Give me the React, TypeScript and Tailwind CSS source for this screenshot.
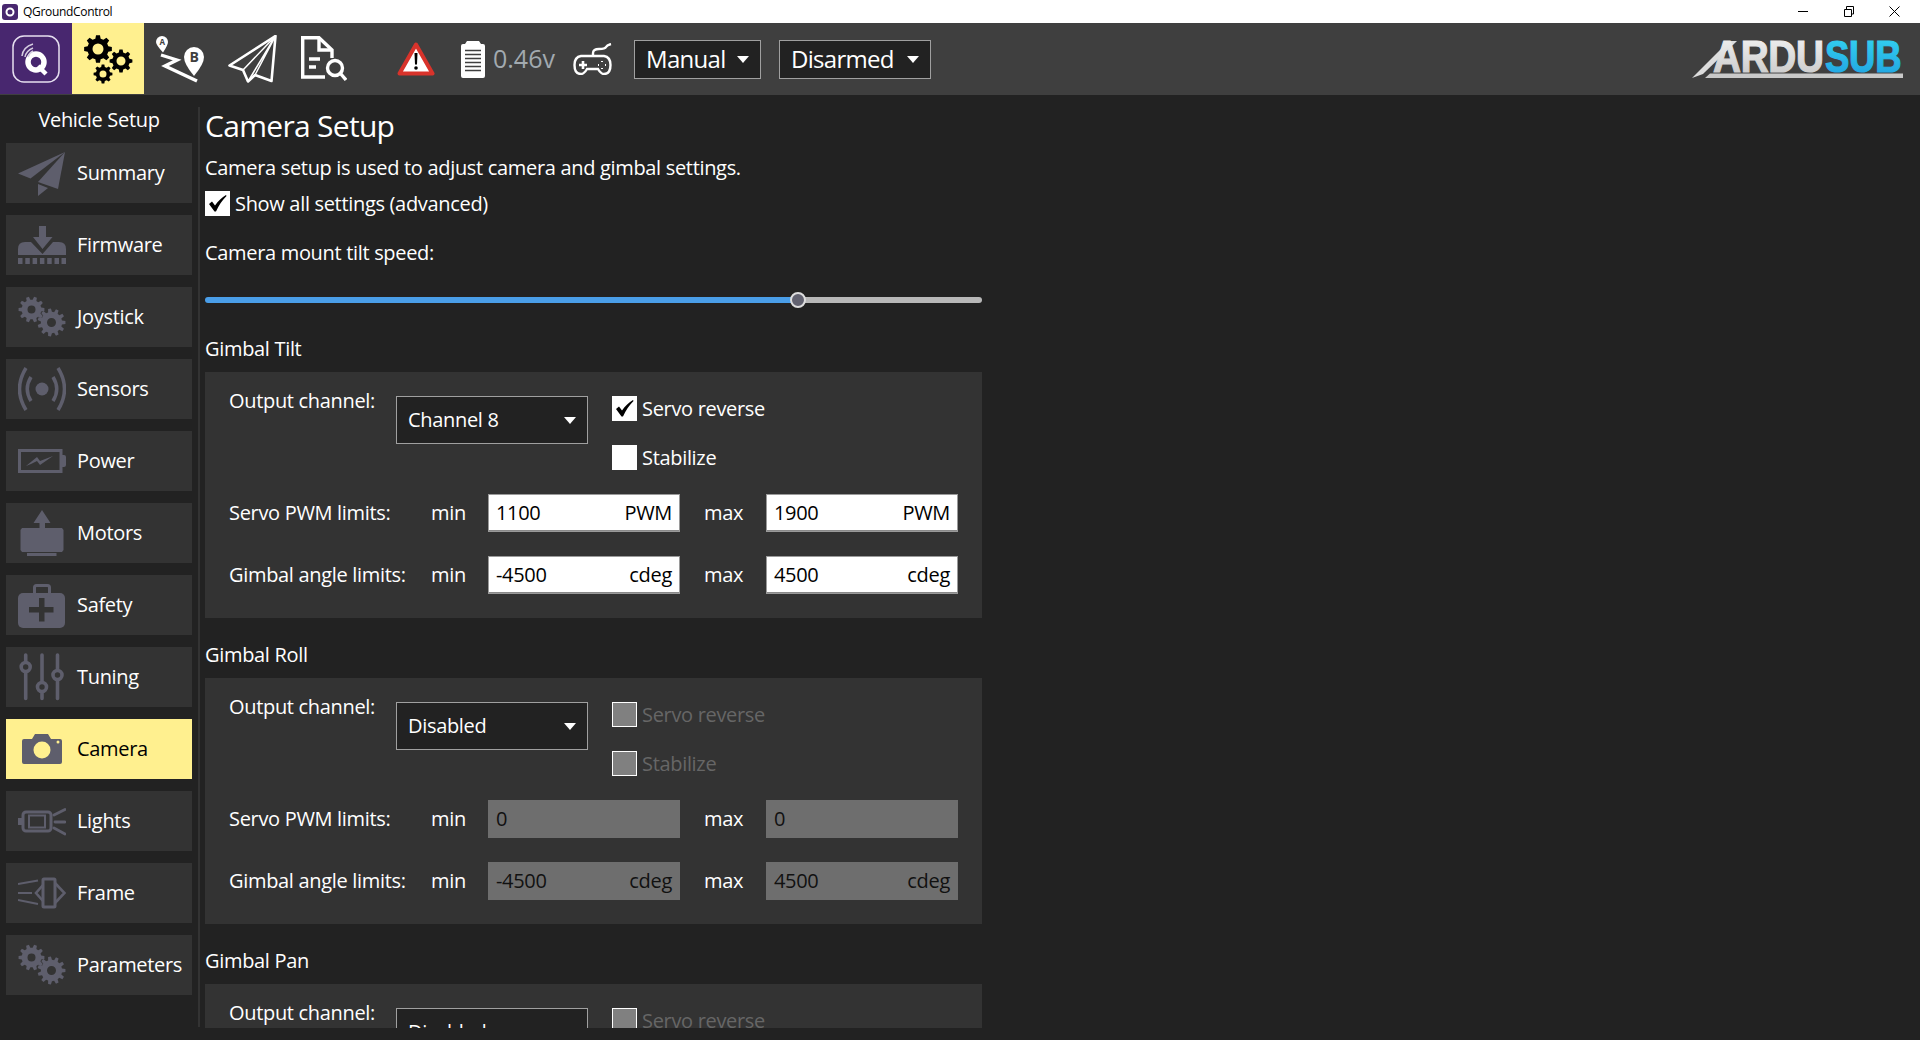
import type { ReactNode } from "react";

const ICON = "#5e5e6c";
const PANEL = "#333333";

/** Build a gear outline (with hole) as an svg path. */
function gearPath(cx: number, cy: number, r: number, teeth: number, hole: number) {
  const inner = r * 0.76;
  const step = (Math.PI * 2) / teeth;
  let d = "";
  for (let i = 0; i < teeth; i++) {
    const a = i * step;
    const pts: [number, number][] = [
      [inner, a - step * 0.32],
      [r, a - step * 0.18],
      [r, a + step * 0.18],
      [inner, a + step * 0.32],
    ];
    for (const [rad, ang] of pts) {
      d += `${d ? "L" : "M"}${(cx + rad * Math.cos(ang)).toFixed(2)} ${(cy + rad * Math.sin(ang)).toFixed(2)}`;
    }
  }
  d += `Z M${cx - hole} ${cy} a${hole} ${hole} 0 1 0 ${hole * 2} 0 a${hole} ${hole} 0 1 0 ${-hole * 2} 0 Z`;
  return d;
}

function Gears() {
  return (
    <svg width="48" height="48" viewBox="0 0 48 48">
      <path fill={ICON} fillRule="evenodd" d={gearPath(13.5, 16.5, 13, 10, 4)} />
      <path fill={ICON} fillRule="evenodd" d={gearPath(33.5, 29.5, 14, 11, 4.5)} />
    </svg>
  );
}

const sidebarIcons: Record<string, ReactNode> = {
  Summary: (
    <svg width="48" height="48" viewBox="0 0 48 48" fill={ICON}>
      <path d="M47 3 0 24.5 12.5 29.5Z" />
      <path d="M47 3 20 33 40 40Z" />
      <path d="M20 35V47L30 39Z" />
    </svg>
  ),
  Firmware: (
    <svg width="48" height="48" viewBox="0 0 48 48" fill={ICON}>
      <path d="M21 5h7v11h6.500L24.500 28 15 16h6Z" />
      <path d="M0 34v-6q0-7 7-7h6l11.500 12L35 21h6q7 0 7 7v6Z" />
      <path d="M0 37h4.500v6H0ZM7.300 37h4.500v6H7.300ZM14.600 37h4.500v6h-4.500ZM21.900 37h4.500v6h-4.500ZM29.200 37h4.500v6h-4.500ZM36.500 37h4.500v6h-4.500ZM43.500 37H48v6h-4.500Z" />
    </svg>
  ),
  Joystick: <Gears />,
  Sensors: (
    <svg width="48" height="48" viewBox="0 0 48 48" fill="none" stroke={ICON} strokeWidth="3.500">
      <circle cx="24" cy="24" r="6.500" fill={ICON} stroke="none" />
      <path d="M13 12Q5.500 24 13 36M35 12Q42.500 24 35 36" />
      <path d="M8 3Q-5 24 8 45M40 3Q53 24 40 45" />
    </svg>
  ),
  Power: (
    <svg width="48" height="48" viewBox="0 0 48 48" fill="none">
      <path stroke={ICON} strokeWidth="3" d="M1.500 13.500H43V34.500H1.500Z" />
      <path fill={ICON} d="M44 18h2q2 0 2 2v8q0 2-2 2h-2Z" />
      <path fill={ICON} d="M8 29 19 20l3 4 13-5-13 9-3-4-6 3Z" />
    </svg>
  ),
  Motors: (
    <svg width="48" height="48" viewBox="0 0 48 48" fill={ICON}>
      <path d="M24 1 32.500 14H27V19H21.500V14H15.500Z" />
      <path d="M4 19H44L45.500 21V41L44 43H4L2.500 41V21Z" />
      <path d="M9 44H38.500V47H9Z" />
    </svg>
  ),
  Safety: (
    <svg width="48" height="48" viewBox="0 0 48 48">
      <rect x="0" y="12" width="47" height="35" rx="5" fill={ICON} />
      <rect x="16.500" y="4.500" width="15" height="10" rx="2" fill="none" stroke={ICON} strokeWidth="3" />
      <path fill={PANEL} d="M21 17h5.500v9H35.500v5.500H26.500V40.500H21V31.500H11V26H21Z" />
    </svg>
  ),
  Tuning: (
    <svg width="48" height="48" viewBox="0 0 48 48" fill={PANEL} stroke={ICON} strokeWidth="3.600" strokeLinecap="round">
      <path d="M7.700 2V45.500M24 2V45.500M39.500 2V45.500" />
      <circle cx="7.700" cy="14" r="4.500" />
      <circle cx="24" cy="34" r="4.500" />
      <circle cx="39.500" cy="22" r="4.500" />
    </svg>
  ),
  Camera: (
    <svg width="48" height="48" viewBox="0 0 48 48">
      <path fill={ICON} d="M6 14h8l3-5h13l3 5h9q2 0 2 2v21q0 2-2 2H6q-2 0-2-2V16q0-2 2-2Z" />
      <circle cx="24" cy="25" r="8.500" fill="#fff08f" />
      <circle cx="40" cy="17" r="1.500" fill="#fff08f" />
    </svg>
  ),
  Lights: (
    <svg width="48" height="48" viewBox="0 0 48 48" fill="none" stroke={ICON} strokeWidth="2.800" strokeLinecap="round">
      <path fill={ICON} stroke="none" d="M0 21h4v7H0Z" />
      <rect x="5" y="15" width="28" height="19" rx="3" strokeWidth="3" />
      <path strokeWidth="2" d="M11 18.500H27V30.500H11Z" />
      <path d="M36 18 47 12.500M37 25H47M36 31 47 37" />
    </svg>
  ),
  Frame: (
    <svg width="48" height="48" viewBox="0 0 48 48" fill="none" stroke={ICON} strokeWidth="2.600">
      <rect x="25" y="10" width="12" height="28" rx="1" strokeWidth="3" />
      <path d="M25 16 18 24 25 32M37 14 46.500 24 37 34" />
      <path strokeWidth="1.800" d="M0 15 20 11.500M0 24H14M0 31 20 35" />
    </svg>
  ),
  Parameters: <Gears />,
};

const SIDEBAR_ITEMS = [
  "Summary",
  "Firmware",
  "Joystick",
  "Sensors",
  "Power",
  "Motors",
  "Safety",
  "Tuning",
  "Camera",
  "Lights",
  "Frame",
  "Parameters",
];

function Caret() {
  return (
    <svg width="12" height="7" viewBox="0 0 12 7" className="shrink-0">
      <path d="M0 0H12L6 7Z" fill="#ffffff" />
    </svg>
  );
}

function CheckBox({ checked, disabled, label }: { checked?: boolean; disabled?: boolean; label: string }) {
  return (
    <div className="flex h-[25px] items-center gap-[5px]">
      <span
        className={
          disabled
            ? "flex h-[25px] w-[25px] shrink-0 border border-white bg-[#808080]"
            : "flex h-[25px] w-[25px] shrink-0 items-center justify-center bg-white"
        }
      >
        {checked && (
          <svg width="19" height="17" viewBox="0 0 19 17">
            <path d="M1 9 4 6.500 7 10.500C10 6 14 2.500 18 0L18.500 1C14 5.500 11 10 8 16.500H6.500Z" fill="#000000" />
          </svg>
        )}
      </span>
      <span className={disabled ? "pt-[1px] text-[#666666]" : "pt-[1px] text-white"}>{label}</span>
    </div>
  );
}

function Field({ value, unit, disabled }: { value: string; unit?: string; disabled?: boolean }) {
  return (
    <div
      className={
        disabled
          ? "flex h-[38px] w-[192px] items-center justify-between bg-[#6e6e6e] pl-[8px] pr-[8px] text-[#111111]"
          : "flex h-[38px] w-[192px] items-center justify-between border-b-2 border-[#8a8a8a] bg-white pl-[8px] pr-[8px] pt-[1px] text-black outline outline-1 -outline-offset-1 outline-[#9a9a9a]"
      }
    >
      <span>{value}</span>
      {unit && <span>{unit}</span>}
    </div>
  );
}

function LimitRow({
  label,
  min,
  max,
  unit,
  disabled,
  className,
}: {
  label: string;
  min: string;
  max: string;
  unit?: string;
  disabled?: boolean;
  className?: string;
}) {
  return (
    <div className={`flex items-center ${className ?? ""}`}>
      <span className="w-[202px] shrink-0">{label}</span>
      <span className="w-[57px] shrink-0">min</span>
      <Field value={min} unit={unit} disabled={disabled} />
      <span className="w-[86px] shrink-0 pl-[24px]">max</span>
      <Field value={max} unit={unit} disabled={disabled} />
    </div>
  );
}

function GimbalSection({
  name,
  channel,
  enabled,
  minPwm,
  maxPwm,
}: {
  name: string;
  channel: string;
  enabled?: boolean;
  minPwm: string;
  maxPwm: string;
}) {
  return (
    <section className="w-[777px]">
      <div className="mb-[10px] flex h-[28px] items-center pt-[1px]">{name}</div>
      <div className="h-[246px] bg-[#333333] px-[24px] pt-[24px]">
        <div className="flex items-start">
          <span className="w-[167px] shrink-0 leading-[9px]">Output channel:</span>
          <div className="flex h-[48px] w-[192px] items-center justify-between border border-[#a0a0a0] bg-[#222222] pl-[11px] pr-[11px]">
            <span>{channel}</span>
            <Caret />
          </div>
          <div className="ml-[24px] flex flex-col gap-[24px]">
            <CheckBox label="Servo reverse" checked={enabled} disabled={!enabled} />
            <CheckBox label="Stabilize" disabled={!enabled} />
          </div>
        </div>
        <LimitRow
          className="mt-[24px]"
          label="Servo PWM limits:"
          min={minPwm}
          max={maxPwm}
          unit={enabled ? "PWM" : undefined}
          disabled={!enabled}
        />
        <LimitRow
          className="mt-[24px]"
          label="Gimbal angle limits:"
          min="-4500"
          max="4500"
          unit="cdeg"
          disabled={!enabled}
        />
      </div>
    </section>
  );
}

function TopCombo({ label, width }: { label: string; width: string }) {
  return (
    <div className={`flex h-[39px] items-center justify-between border border-[#a0a0a0] bg-[#222222] pl-[11px] pr-[11px] text-[24px] tracking-[-0.7px] ${width}`}>
      <span>{label}</span>
      <Caret />
    </div>
  );
}

function Toolbar() {
  return (
    <header className="flex h-[72px] shrink-0 items-center bg-[#3f3f3f]">
      <div className="flex h-[71px] w-[72px] shrink-0 self-start bg-[#48276f]">
        <svg width="72" height="71" viewBox="0 0 72 71" fill="none">
          <rect x="13" y="13" width="46" height="46" rx="11" stroke="#e6dff0" strokeWidth="1.500" />
          <circle cx="36" cy="39" r="8" stroke="#ffffff" strokeWidth="5.500" />
          <path d="M38 43 46 51" stroke="#ffffff" strokeWidth="4.500" />
          <path d="M22 33Q23 24 33 21M25 34Q26 28 33 25M28 34Q29 30 33 28" stroke="#d5cde0" strokeWidth="1.500" />
        </svg>
      </div>
      <div className="flex h-[71px] w-[72px] shrink-0 self-start bg-[#fff08f]">
        <svg width="72" height="71" viewBox="0 0 72 71">
          <path fillRule="evenodd" d={gearPath(26, 26, 14, 8, 5.500)} />
          <path fillRule="evenodd" d={gearPath(49, 38, 11.500, 8, 4.500)} />
          <path fillRule="evenodd" d={gearPath(31, 51, 9.500, 8, 3.500)} />
        </svg>
      </div>

      <svg width="49" height="48" viewBox="0 0 49 48" className="ml-[11px] shrink-0">
        <path fill="#ffffff" fillRule="evenodd" d="M7 1a6 6 0 0 1 6 6q0 3-5 10.500Q1 10 1 7a6 6 0 0 1 6-6Z" />
        <text x="7" y="10" textAnchor="middle" fontSize="8" fontWeight="700" fill="#3f3f3f" fontFamily="Open Sans">A</text>
        <path d="M6 20 22 25 10 31 42 46" fill="none" stroke="#ffffff" strokeWidth="3.400" />
        <path fill="#ffffff" d="M39 12a10 10 0 0 1 10 10q0 7-10 19Q29 29 29 22a10 10 0 0 1 10-10Z" />
        <text x="39" y="27" textAnchor="middle" fontSize="14" fontWeight="700" fill="#3f3f3f" fontFamily="Open Sans">B</text>
      </svg>
      <svg width="49" height="48" viewBox="0 0 49 48" fill="none" stroke="#ffffff" strokeWidth="2.600" strokeLinejoin="round" className="ml-[24px] shrink-0">
        <path d="M47.500 1 1.500 30.500 15 35 20 46.500 27 40 43.500 46Z" />
        <path strokeWidth="1.500" d="M47.500 1 15 35M47.500 1 20 46.500M47.500 1 27 40" />
      </svg>
      <svg width="46" height="46" viewBox="0 0 46 46" fill="none" stroke="#ffffff" strokeWidth="3.400" className="ml-[24px] shrink-0">
        <path d="M31 22V14L18 1.700H1.700V41H24" />
        <path d="M18 1.700V14H31M8 23H19M8 31H15" />
        <circle cx="34" cy="32" r="7.500" />
        <path d="M39.500 37.500 45 44" />
      </svg>
      <svg width="38" height="34" viewBox="0 0 38 34" className="ml-[50px] shrink-0">
        <path d="M19 2.500 35.500 31.500H2.500Z" fill="#ffffff" stroke="#d8332b" strokeWidth="4" strokeLinejoin="round" />
        <path d="M17.500 11H20.500L20 22.500H18Z" fill="#000000" />
        <circle cx="19" cy="26" r="1.800" fill="#000000" />
      </svg>
      <svg width="24" height="37" viewBox="0 0 24 37" className="ml-[26px] shrink-0">
        <path d="M6 0H18L20 3H22Q24 3 24 5V35Q24 37 22 37H2Q0 37 0 35V5Q0 3 2 3H4Z" fill="#ffffff" />
        <path d="M4 9.500H20M4 13.500H20M4 17.500H20M4 21.500H20M4 25.500H20M4 29.500H20" stroke="#3f3f3f" strokeWidth="1.400" />
      </svg>
      <span className="ml-[8px] w-[61px] shrink-0 text-[25px] tracking-normal text-[#a2aab0]">0.46v</span>
      <svg width="39" height="32" viewBox="0 0 39 32" fill="none" stroke="#ffffff" strokeWidth="2.400" className="ml-[19px] shrink-0">
        <path d="M20 13V10Q20 6 26 6 32 6 33 4T38 1" />
        <path d="M8 13H31Q37.500 14 37.500 22 37.500 31 31 31 28 31 25 26H14Q11 31 8 31 1.500 31 1.500 22 1.500 14 8 13Z" />
        <path d="M6 22H14M10 18V26" strokeWidth="2.600" />
        <path d="M29 18V19M29 25V26M25 22H26M32 22H33" strokeWidth="2" />
      </svg>

      <TopCombo label="Manual" width="ml-[22px] w-[127px]" />
      <TopCombo label="Disarmed" width="ml-[18px] w-[152px]" />

      <svg width="211" height="38" viewBox="0 0 211 38" className="ml-auto mr-[17px] shrink-0">
        <defs>
          <linearGradient id="ardu" x1="0" y1="0" x2="0" y2="1">
            <stop offset="0" stopColor="#f4f4f4" />
            <stop offset="1" stopColor="#c6c6c6" />
          </linearGradient>
          <linearGradient id="sub" x1="0" y1="0" x2="0" y2="1">
            <stop offset="0" stopColor="#35d6f2" />
            <stop offset="1" stopColor="#1f9fe0" />
          </linearGradient>
        </defs>
        <path fill="#dcdcdc" d="M0 38 37 1H45L11 34Z" />
        <text transform="translate(21 32) scale(0.88 1)" fontFamily="Liberation Sans" fontWeight="700" fontSize="44" fill="url(#ardu)" stroke="url(#ardu)" strokeWidth="1.200">ARDU</text>
        <text transform="translate(133 32) scale(0.83 1)" fontFamily="Liberation Sans" fontWeight="700" fontSize="44" fill="url(#sub)" stroke="url(#sub)" strokeWidth="1.200">SUB</text>
        <path fill="#c9c9c9" d="M13 38 18 33.500H211V38Z" />
      </svg>
    </header>
  );
}

export default function App() {
  return (
    <div className="flex h-[1040px] w-[1920px] flex-col overflow-hidden bg-[#222222] font-['Open_Sans',sans-serif] text-[20px] tracking-[-0.32px] text-white">
      {/* Windows title bar */}
      <div className="flex h-[23px] shrink-0 items-center bg-white pl-[2px] pr-[20px] text-black">
        <svg width="16" height="16" viewBox="0 0 16 16" fill="none">
          <rect width="16" height="16" rx="3" fill="#48276f" />
          <circle cx="8" cy="8" r="3.500" stroke="#ffffff" strokeWidth="2" />
        </svg>
        <span className="ml-[5px] text-[12px]">QGroundControl</span>
        <svg width="102" height="11" viewBox="0 0 102 11" fill="none" stroke="#000000" className="ml-auto">
          <path d="M0 5.500H10" />
          <path d="M46.500 3.500H53.500V10.500H46.500ZM48.500 3.500V.5H55.500V8H53.500" />
          <path d="M91.500.5 101.500 10.500M101.500.5 91.500 10.500" />
        </svg>
      </div>

      <Toolbar />

      <div className="flex min-h-0 flex-1 items-start">
        <aside className="w-[198px] shrink-0 px-[6px] pt-[11px]">
          <div className="mb-[9px] flex h-[28px] items-center justify-center">Vehicle Setup</div>
          <div className="flex flex-col gap-[12px]">
            {SIDEBAR_ITEMS.map((item) => (
              <div
                key={item}
                className={
                  item === "Camera"
                    ? "flex h-[60px] items-center gap-[11px] bg-[#fff08f] pl-[12px] text-black"
                    : "flex h-[60px] items-center gap-[11px] bg-[#333333] pl-[12px]"
                }
              >
                {sidebarIcons[item]}
                <span>{item}</span>
              </div>
            ))}
          </div>
        </aside>
        <div className="mt-[12px] h-[920px] w-[2px] shrink-0 bg-[#333333]" />
        <main className="ml-[5px] h-[933px] w-[800px] overflow-hidden pt-[10px]">
          <h1 className="flex h-[40px] items-center text-[30px] tracking-[-0.7px]">Camera Setup</h1>
          <p className="mt-[9px] flex h-[28px] items-center">Camera setup is used to adjust camera and gimbal settings.</p>
          <div className="mt-[9px]">
            <CheckBox label="Show all settings (advanced)" checked />
          </div>
          <p className="mt-[23px] flex h-[28px] items-center">Camera mount tilt speed:</p>
          <div className="relative mt-[25px] flex h-[16px] w-[777px] items-center">
            <div className="h-[6px] w-[593px] rounded-l-[3px] bg-[#4a9ee8]" />
            <div className="h-[6px] flex-1 rounded-r-[3px] bg-[#b8b8b8]" />
            <div className="absolute left-[585px] top-0 h-[16px] w-[16px] rounded-full border-2 border-[#dddddd] bg-[#626270]" />
          </div>
          <div className="mt-[26px] flex flex-col gap-[22px]">
            <GimbalSection name="Gimbal Tilt" channel="Channel 8" enabled minPwm="1100" maxPwm="1900" />
            <GimbalSection name="Gimbal Roll" channel="Disabled" minPwm="0" maxPwm="0" />
            <GimbalSection name="Gimbal Pan" channel="Disabled" minPwm="0" maxPwm="0" />
          </div>
        </main>
      </div>
    </div>
  );
}
